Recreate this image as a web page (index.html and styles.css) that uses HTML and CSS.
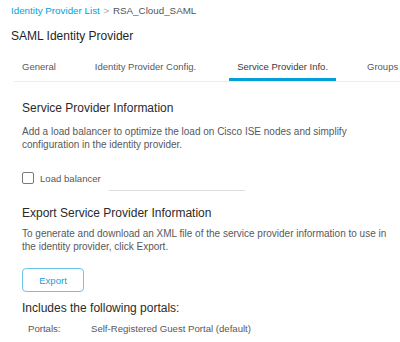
FILE: index.html
```html
<!DOCTYPE html>
<html>
<head>
  <title>SAML Identity Provider</title>
  <link rel="stylesheet" href="styles.css">
</head>
<body>
  <div class="crumbs">
    <a class="crumb-link">Identity Provider List</a>
    <span class="crumb-sep">&gt;</span>
    <span class="crumb-current">RSA_Cloud_SAML</span>
  </div>
  <h1 class="page-title">SAML Identity Provider</h1>

  <div class="tabs">
    <div class="tab">General</div>
    <div class="tab">Identity Provider Config.</div>
    <div class="tab active">Service Provider Info.</div>
    <div class="tab">Groups</div>
  </div>

  <div class="content">
    <h2 class="section-title first">Service Provider Information</h2>
    <p class="desc first-desc">Add a load balancer to optimize the load on Cisco ISE nodes and simplify configuration in the identity provider.</p>

    <div class="lb-row">
      <label class="check"><span class="box"></span>Load balancer</label>
      <div class="lb-input"></div>
    </div>

    <h2 class="section-title">Export Service Provider Information</h2>
    <p class="desc">To generate and download an XML file of the service provider information to use in the identity provider, click Export.</p>

    <button class="btn-export">Export</button>

    <h2 class="section-title portals-title">Includes the following portals:</h2>
    <div class="portal-row">
      <span class="portal-label">Portals:</span>
      <span class="portal-value">Self-Registered Guest Portal (default)</span>
    </div>
  </div>
</body>
</html>
```

FILE: styles.css
```css
body {
  margin: 0;
  font-family: "Liberation Sans", Arial, sans-serif;
  color: #39393b;
  background: #fff;
  width: 400px;
  height: 342px;
  overflow: hidden;
}

.crumbs {
  padding: 4px 0 0 11px;
  font-size: 9.8px;
  height: 14px;
  line-height: 14px;
}

.crumb-link {
  color: #049fd9;
}

.crumb-sep {
  color: #aaa;
  margin: 0 1px;
}

.crumb-current {
  color: #555;
}

.page-title {
  margin: 10px 0 0 11px;
  font-size: 12px;
  font-weight: normal;
  color: #1f1f1f;
  line-height: 16px;
}

.tabs {
  display: flex;
  gap: 23px;
  margin: 11px 0 0 14px;
  border-bottom: 1px solid #ececec;
  white-space: nowrap;
}

.tab {
  font-size: 9.5px;
  color: #58585b;
  padding: 0 8px;
  line-height: 24px;
  height: 26px;
  box-sizing: border-box;
}

.tab.active {
  color: #39393b;
  border-bottom: 3px solid #049fd9;
  margin-left: 2px;
}

.content {
  padding-left: 22px;
}

.section-title {
  font-size: 12px;
  font-weight: normal;
  color: #2a2a2a;
  margin: 14px 0 0 0;
  line-height: 16px;
}

.section-title.first {
  margin-top: 18px;
}

.desc {
  font-size: 10px;
  color: #58585b;
  line-height: 13px;
  margin: 6px 0 0 0;
  width: 367px;
}

.first-desc {
  margin-top: 9px;
}

.lb-row {
  display: flex;
  align-items: flex-start;
  margin-top: 21px;
}

.check {
  display: flex;
  align-items: center;
  font-size: 9.6px;
  color: #58585b;
  height: 12px;
  width: 87px;
}

.box {
  width: 10px;
  height: 10px;
  border: 1px solid #7a7a7a;
  border-radius: 2px;
  margin-right: 6px;
  flex: none;
}

.lb-input {
  width: 136px;
  height: 18px;
  border-bottom: 1px solid #dcdcdc;
}

.btn-export {
  display: block;
  margin-top: 15px;
  width: 62px;
  height: 24px;
  border: 1px solid #6cc4ea;
  border-radius: 4px;
  background: #fff;
  color: #1a9fd9;
  font-family: "Liberation Sans", Arial, sans-serif;
  font-size: 9.6px;
  padding: 0;
}

.portals-title {
  margin-top: 8px;
}

.portal-row {
  display: flex;
  font-size: 9.6px;
  color: #58585b;
  margin: 6px 0 0 6px;
  line-height: 14px;
}

.portal-label {
  width: 63px;
}
```
